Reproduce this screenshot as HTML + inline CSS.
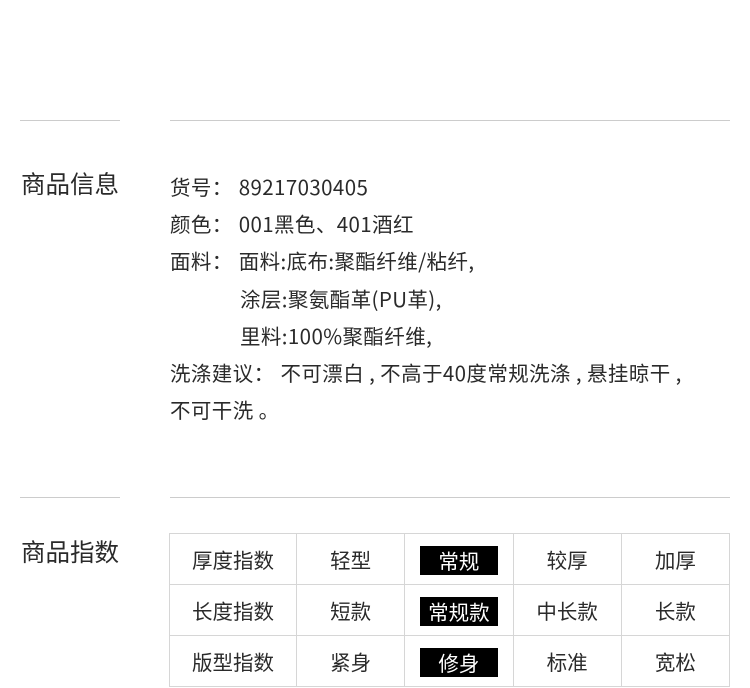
<!DOCTYPE html>
<html><head><meta charset="utf-8"><style>
body{margin:0;width:750px;height:688px;background:#fff;position:relative;overflow:hidden;font-family:"Noto Sans CJK SC","Liberation Sans",sans-serif;color:#2a2a2a}
.l{position:absolute;height:1px;background:#ccc}
.h{position:absolute;left:21px;font-size:24.5px;line-height:30px}
.info{position:absolute;left:170px;top:168px;font-size:20.5px;line-height:37.2px;letter-spacing:0.4px}
.info div{white-space:nowrap}
.info span{margin-left:6px}
table{position:absolute;left:169px;top:533px;border-collapse:collapse;font-size:20.5px;table-layout:fixed;width:561px}
td{border:1px solid #d6d6d6;height:50px;padding:0;text-align:center;vertical-align:middle}
b{display:inline-block;vertical-align:middle;background:#000;color:#fff;font-weight:normal;width:78px;height:29px;line-height:28px}
</style></head><body>
<div class="l" style="left:20px;width:100px;top:120px"></div>
<div class="l" style="left:170px;width:560px;top:120px"></div>
<div class="l" style="left:20px;width:100px;top:497px"></div>
<div class="l" style="left:170px;width:560px;top:497px"></div>
<div class="h" style="top:169px">商品信息</div>
<div class="h" style="top:537px">商品指数</div>
<div class="info">
<div>货号：<span>89217030405</span></div>
<div>颜色：<span>001黑色、401酒红</span></div>
<div>面料：<span>面料:底布:聚酯纤维/粘纤,</span></div>
<div style="padding-left:70px">涂层:聚氨酯革(PU革),</div>
<div style="padding-left:70px">里料:100%聚酯纤维,</div>
<div>洗涤建议：<span>不可漂白 , 不高于40度常规洗涤 , 悬挂晾干 ,</span></div>
<div>不可干洗 。</div>
</div>
<table>
<colgroup><col style="width:127px"><col><col><col><col></colgroup>
<tr><td>厚度指数</td><td>轻型</td><td><b>常规</b></td><td>较厚</td><td>加厚</td></tr>
<tr><td>长度指数</td><td>短款</td><td><b>常规款</b></td><td>中长款</td><td>长款</td></tr>
<tr><td>版型指数</td><td>紧身</td><td><b>修身</b></td><td>标准</td><td>宽松</td></tr>
</table>
</body></html>
